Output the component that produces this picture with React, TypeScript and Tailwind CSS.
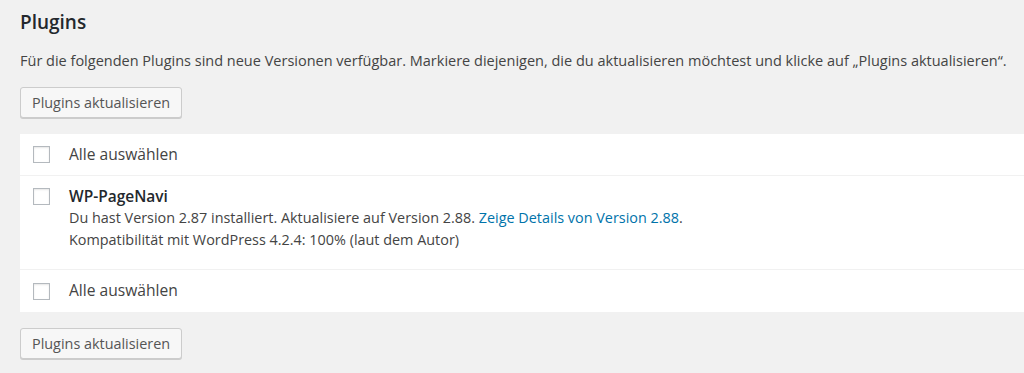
import React from "react";

function Checkbox() {
  return (
    <span className="block w-[17px] h-[17px] shrink-0 border border-[#b4b9be] bg-white shadow-[inset_0_1px_2px_rgba(0,0,0,0.1)]" />
  );
}

function Button() {
  return (
    <button className="h-[31px] px-[11px] border border-[#cccccc] bg-[#f7f7f7] rounded-[3px] shadow-[0_1px_0_#cccccc] text-[14.4px] text-[#555555] leading-[29px]">
      Plugins aktualisieren
    </button>
  );
}

export default function App() {
  return (
    <div
      className="min-h-[373px] w-[1024px] overflow-hidden bg-[#f1f1f1] pl-[20px] text-[#444444]"
      style={{ fontFamily: '"Open Sans", sans-serif' }}
    >
      <h1 className="pt-[8px] text-[19px] leading-[29px] font-semibold text-[#23282d]">Plugins</h1>
      <p className="mt-[14px] text-[14.5px] leading-[20px] whitespace-nowrap">
        Für die folgenden Plugins sind neue Versionen verfügbar. Markiere diejenigen, die du aktualisieren möchtest und klicke auf „Plugins aktualisieren“.
      </p>
      <div className="mt-[16px] h-[31px]">
        <Button />
      </div>
      <div className="mt-[16px] bg-white text-[14.4px]">
        <div className="h-[42px] flex items-center border-b border-[#f1f1f1]">
          <div className="pl-[13px] w-[49px]">
            <Checkbox />
          </div>
          <span className="text-[15.6px]">Alle auswählen</span>
        </div>
        <div className="h-[94px] flex border-b border-[#f1f1f1] pt-[12px]">
          <div className="pl-[13px] w-[49px]">
            <Checkbox />
          </div>
          <div className="leading-[22px] -mt-[3px]">
            <div className="font-semibold text-[15.5px] text-[#23282d]">WP-PageNavi</div>
            <div>
              Du hast Version 2.87 installiert. Aktualisiere auf Version 2.88.{" "}
              <a className="text-[#0073aa]">Zeige Details von Version 2.88</a>.
            </div>
            <div>Kompatibilität mit WordPress 4.2.4: 100% (laut dem Autor)</div>
          </div>
        </div>
        <div className="h-[42px] flex items-center">
          <div className="pl-[13px] w-[49px]">
            <Checkbox />
          </div>
          <span className="text-[15.6px]">Alle auswählen</span>
        </div>
      </div>
      <div className="mt-[16px] h-[31px]">
        <Button />
      </div>
    </div>
  );
}
